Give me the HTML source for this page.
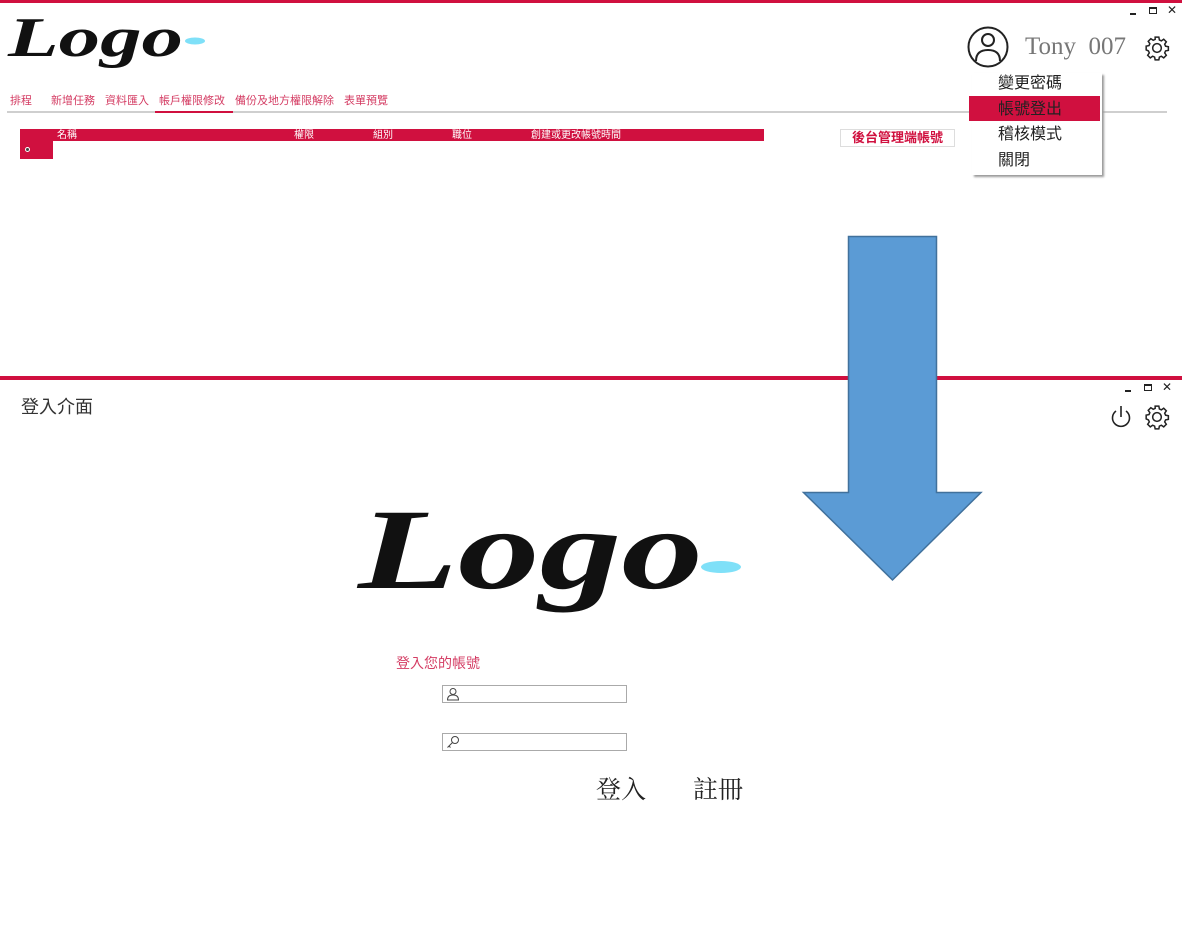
<!DOCTYPE html>
<html><head><meta charset="utf-8"><style>
*{margin:0;padding:0;box-sizing:border-box}
body{width:1182px;height:944px;background:#fff;position:relative;overflow:hidden;font-family:"Liberation Sans","Noto Sans CJK TC",sans-serif}
.a{position:absolute}
.cj{font-family:"Liberation Sans","Noto Sans CJK TC",sans-serif}
.tab{position:absolute;top:0;white-space:nowrap}
</style></head><body>
<div class="a" style="left:0;top:0;width:1182px;height:3px;background:#d0103f"></div>
<div class="a" style="left:1130px;top:13px;width:6px;height:2px;background:#222"></div>
<div class="a" style="left:1149px;top:7px;width:8px;height:7px;border:1.5px solid #222;border-top-width:2px"></div>
<div class="a" style="left:1167px;top:3px;font-size:12px;color:#222">✕</div>
<svg class="a" style="left:0;top:8px" width="220" height="70">
<text x="8" y="48" font-family="Liberation Serif" font-style="italic" font-weight="bold" font-size="56" textLength="175" lengthAdjust="spacingAndGlyphs" fill="#111">Logo</text>
<ellipse cx="195" cy="33" rx="10" ry="3.5" fill="#7fe0f8"/></svg>
<div class="a cj" style="left:0;top:92px;font-size:11px;color:#d43c63;width:400px;height:14px">
<span class="tab" style="left:10px">排程</span><span class="tab" style="left:51px">新增任務</span><span class="tab" style="left:105px">資料匯入</span><span class="tab" style="left:159px">帳戶權限修改</span><span class="tab" style="left:235px">備份及地方權限解除</span><span class="tab" style="left:344px">表單預覽</span></div>
<div class="a" style="left:7px;top:111px;width:1160px;height:2px;background:#cfcfcf"></div>
<div class="a" style="left:155px;top:111px;width:78px;height:2px;background:#d0103f"></div>
<div class="a" style="left:20px;top:129px;width:744px;height:12px;background:#d0103f"></div>
<div class="a" style="left:20px;top:129px;width:33px;height:30px;background:#d0103f"></div>
<div class="a" style="left:25px;top:147px;width:5px;height:5px;border-radius:50%;background:#444;border:1px solid #fff"></div>
<div class="a cj" style="left:0;top:130px;font-size:10px;color:#fff;line-height:11px;width:780px">
<span class="a" style="left:57px">名稱</span><span class="a" style="left:294px">權限</span><span class="a" style="left:373px">組別</span><span class="a" style="left:452px">職位</span><span class="a" style="left:531px">創建或更改帳號時間</span></div>
<div class="a cj" style="left:840px;top:129px;width:115px;height:18px;border:1px solid #ddd;color:#d0103f;font-weight:bold;font-size:13px;text-align:center;line-height:16px">後台管理端帳號</div>
<svg class="a" style="left:965px;top:23px" width="46" height="48"><circle cx="23" cy="24" r="19.5" fill="none" stroke="#222" stroke-width="2"/><circle cx="23" cy="17" r="6" fill="none" stroke="#222" stroke-width="2"/><path d="M11 38 Q11 27 23 27 Q35 27 35 38" fill="none" stroke="#222" stroke-width="2"/></svg>
<div class="a" style="left:1025px;top:33px;font-family:'Liberation Serif',serif;font-size:25px;color:#777">Tony&nbsp;&nbsp;007</div>
<svg class="a" style="left:1144px;top:35px" width="26" height="26" viewBox="0 0 24 24"><path d="M12 8a4 4 0 1 0 0 8a4 4 0 1 0 0-8zM10.3 2h3.4l.5 2.6 1.8.8 2.2-1.5 2.4 2.4-1.5 2.2.8 1.8 2.6.5v3.4l-2.6.5-.8 1.8 1.5 2.2-2.4 2.4-2.2-1.5-1.8.8-.5 2.6h-3.4l-.5-2.6-1.8-.8-2.2 1.5-2.4-2.4 1.5-2.2-.8-1.8L2 13.7v-3.4l2.6-.5.8-1.8-1.5-2.2 2.4-2.4 2.2 1.5 1.8-.8z" fill="none" stroke="#222" stroke-width="1.4"/></svg>
<div class="a" style="left:972px;top:73px;width:130px;height:102px;background:#fff;box-shadow:2px 2px 2px #999"></div>
<div class="a" style="left:969px;top:96px;width:131px;height:25px;background:#d0103f"></div>
<div class="a cj" style="left:998px;top:71px;font-size:16px;line-height:25.5px;color:#222">變更密碼<br>帳號登出<br>稽核模式<br>關閉</div>
<div class="a" style="left:0;top:376px;width:1182px;height:4px;background:#d0103f"></div>
<div class="a" style="left:1125px;top:390px;width:6px;height:2px;background:#222"></div>
<div class="a" style="left:1144px;top:384px;width:8px;height:7px;border:1.5px solid #222;border-top-width:2px"></div>
<div class="a" style="left:1162px;top:380px;font-size:12px;color:#222">✕</div>
<div class="a cj" style="left:21px;top:393px;font-size:18px;color:#333">登入介面</div>
<svg class="a" style="left:1109px;top:404px" width="24" height="26"><path d="M7 7A8.5 8.5 0 1 0 17 7" fill="none" stroke="#222" stroke-width="1.6"/><path d="M12 2v11" stroke="#222" stroke-width="1.6"/></svg>
<svg class="a" style="left:1144px;top:404px" width="26" height="26" viewBox="0 0 24 24"><path d="M12 8a4 4 0 1 0 0 8a4 4 0 1 0 0-8zM10.3 2h3.4l.5 2.6 1.8.8 2.2-1.5 2.4 2.4-1.5 2.2.8 1.8 2.6.5v3.4l-2.6.5-.8 1.8 1.5 2.2-2.4 2.4-2.2-1.5-1.8.8-.5 2.6h-3.4l-.5-2.6-1.8-.8-2.2 1.5-2.4-2.4 1.5-2.2-.8-1.8L2 13.7v-3.4l2.6-.5.8-1.8-1.5-2.2 2.4-2.4 2.2 1.5 1.8-.8z" fill="none" stroke="#222" stroke-width="1.4"/></svg>
<svg class="a" style="left:800px;top:234px" width="186" height="350"><path d="M48.5 2.5H136.5V258.5H181L92.5 346L3.5 258.5H48.5Z" fill="#5b9bd5" stroke="#41719c" stroke-width="1.5"/></svg>
<svg class="a" style="left:350px;top:495px" width="400" height="150">
<text x="8" y="93" font-family="Liberation Serif" font-style="italic" font-weight="bold" font-size="115" textLength="345" lengthAdjust="spacingAndGlyphs" fill="#111">Logo</text>
<ellipse cx="371" cy="72" rx="20" ry="6" fill="#7fe0f8"/></svg>
<div class="a cj" style="left:396px;top:653px;font-size:14px;color:#d43c63">登入您的帳號</div>
<div class="a" style="left:442px;top:685px;width:185px;height:18px;border:1px solid #aaa"></div>
<svg class="a" style="left:446px;top:687px" width="14" height="14"><circle cx="7" cy="4.5" r="3" fill="none" stroke="#444"/><path d="M1.5 13Q1.5 8 7 8Q12.5 8 12.5 13Z" fill="none" stroke="#444"/></svg>
<div class="a" style="left:442px;top:733px;width:185px;height:18px;border:1px solid #aaa"></div>
<svg class="a" style="left:446px;top:735px" width="14" height="14"><circle cx="9" cy="5" r="3.5" fill="none" stroke="#444"/><path d="M6.5 7.5L1.5 12.5M3 11l1.5 1.5" fill="none" stroke="#444"/></svg>
<div class="a" style="left:596px;top:770px;font-family:'Liberation Serif','Noto Serif CJK SC',serif;font-size:25px;color:#222">登入</div>
<div class="a" style="left:693px;top:770px;font-family:'Liberation Serif','Noto Serif CJK SC',serif;font-size:25px;color:#222">註冊</div>
</body></html>
